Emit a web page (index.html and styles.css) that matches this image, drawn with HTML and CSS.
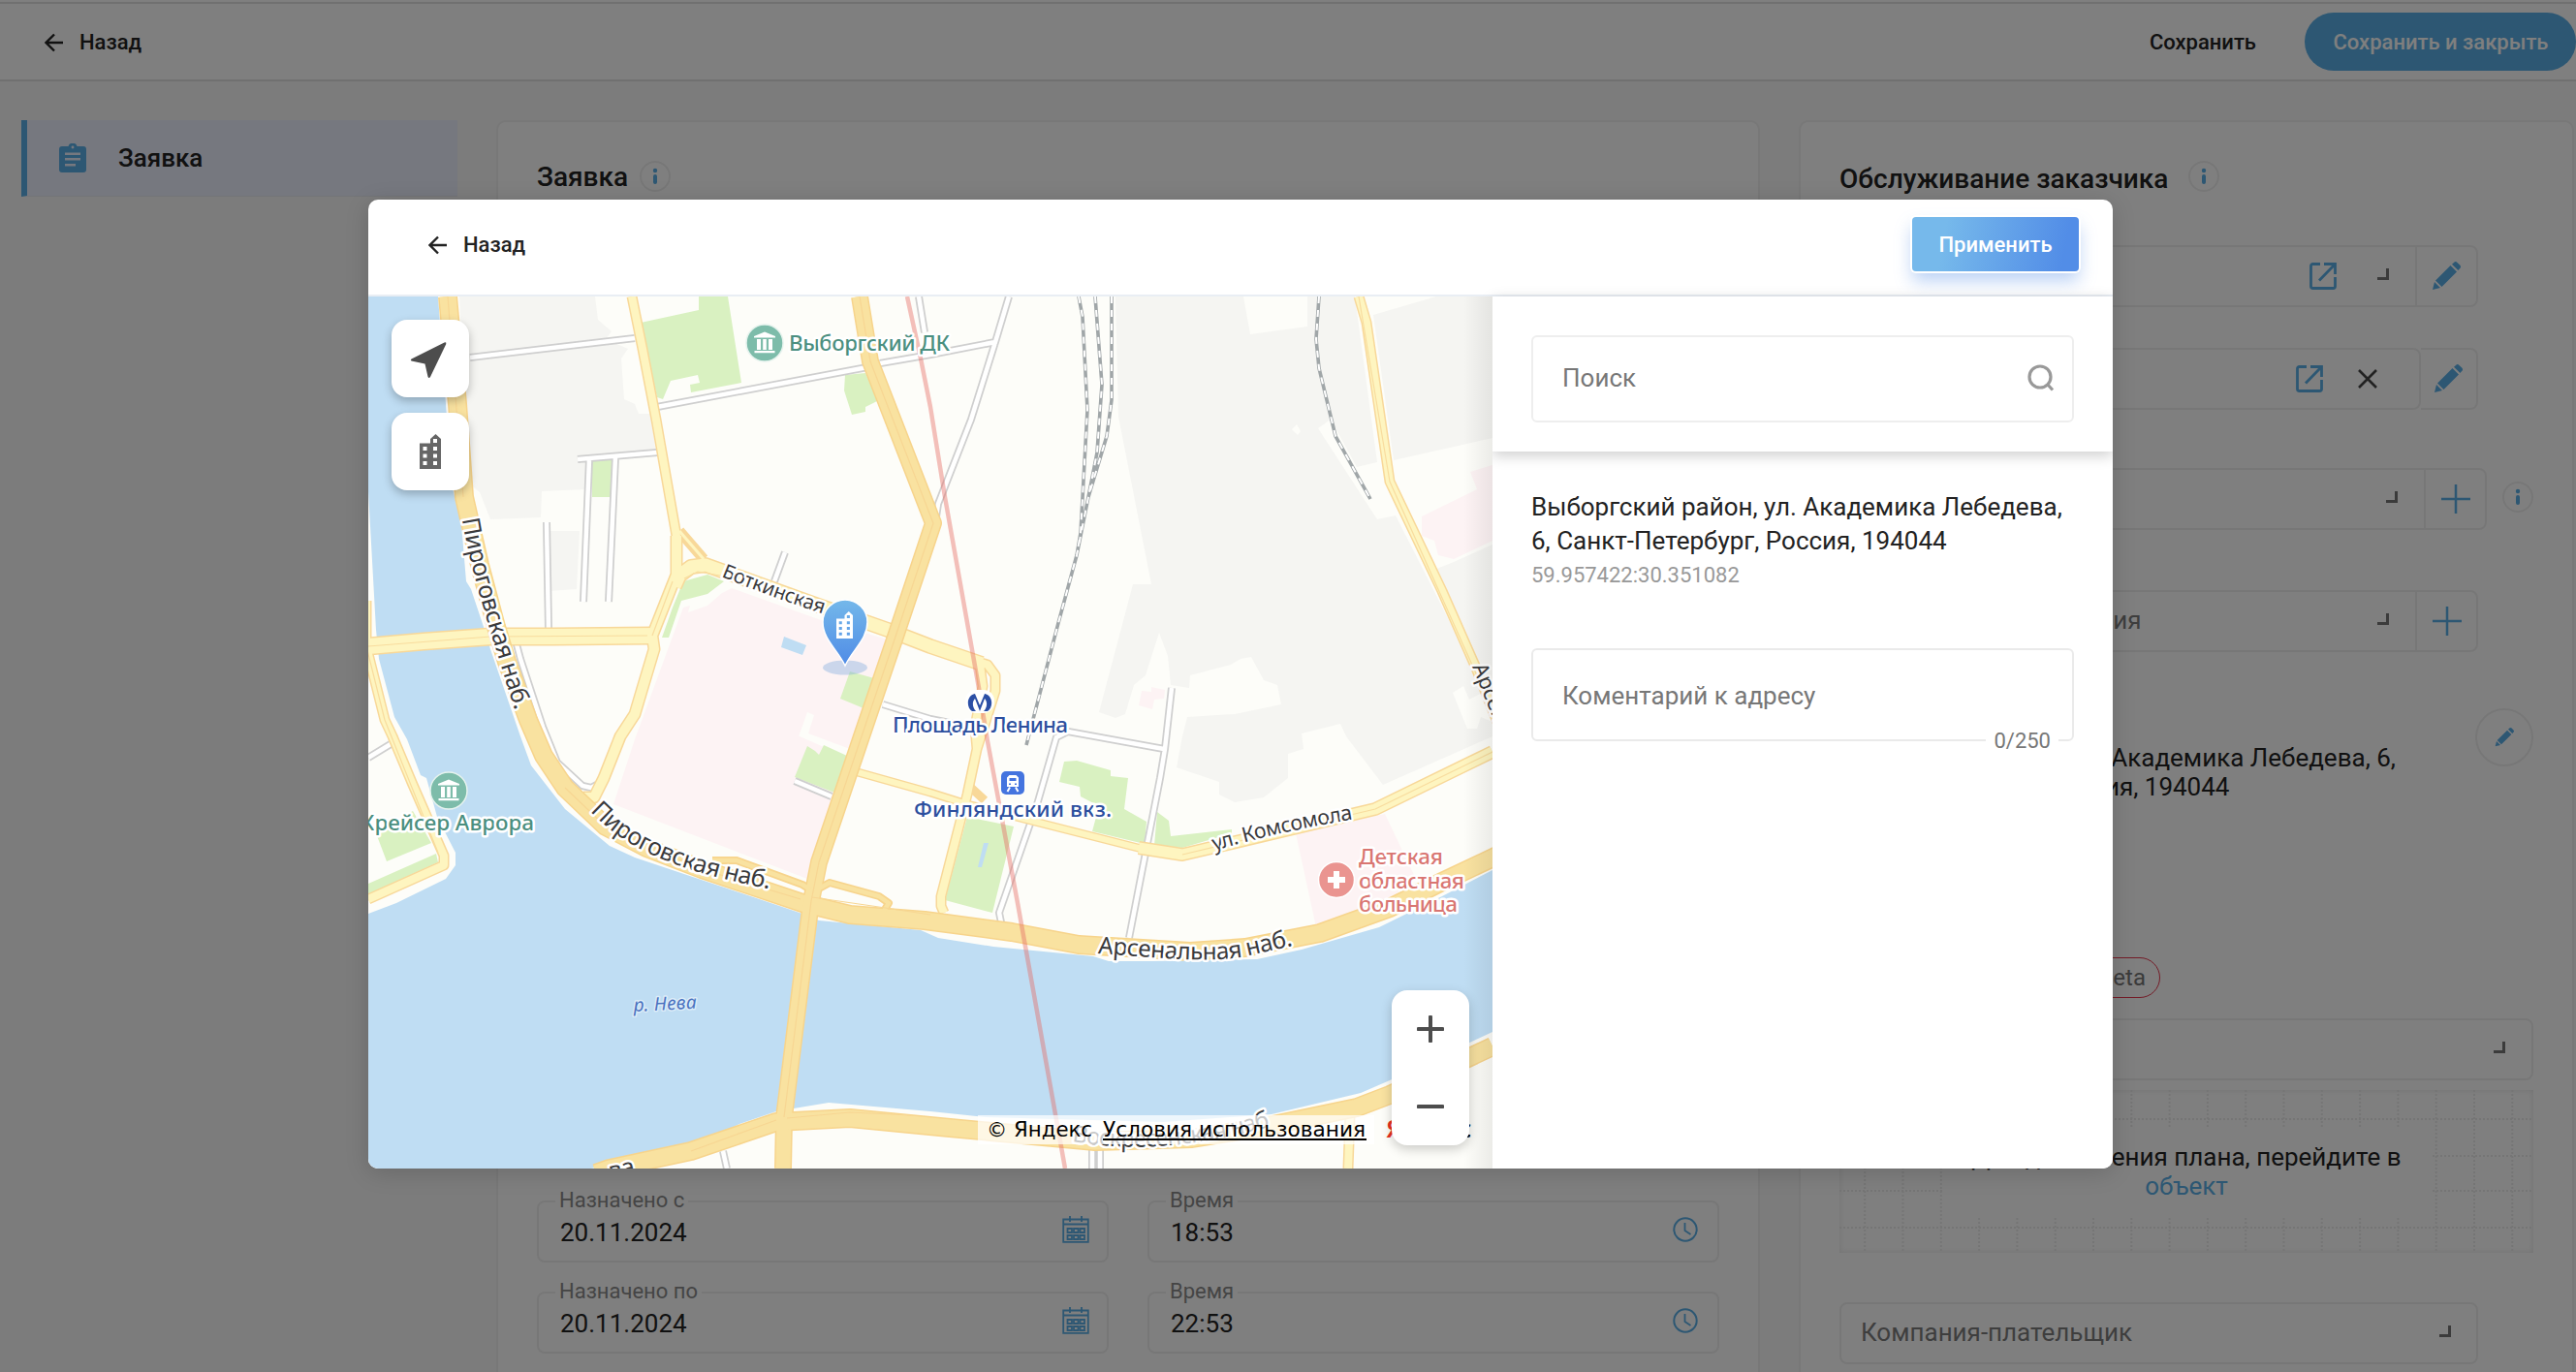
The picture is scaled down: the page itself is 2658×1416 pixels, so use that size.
FILE: index.html
```html
<!DOCTYPE html>
<html lang="ru">
<head>
<meta charset="utf-8">
<title>Заявка</title>
<link rel="stylesheet" href="styles.css">
</head>
<body>
<svg class="defs" width="0" height="0">
  <symbol id="i-back" viewBox="0 0 20 20"><path d="M19 10H2M10 1.5 1.5 10l8.500 8.500" fill="none" stroke="currentColor" stroke-width="2.400"/></symbol>
  <symbol id="i-open" viewBox="0 0 28 28"><path d="M11 1.500H3.500a2 2 0 0 0-2 2v21a2 2 0 0 0 2 2h21a2 2 0 0 0 2-2V15M15 1.500h11.500V12M26 2 10 18.500" fill="none" stroke="currentColor" stroke-width="2.800"/></symbol>
  <symbol id="i-pencil" viewBox="0 0 30 30"><path d="M1 29l2-8 6 6zM4 19.500 19.500 4l6.500 6.500L10.500 26zM21 2.700 23 .9a2.500 2.500 0 0 1 3.500 0l2.700 2.700a2.500 2.500 0 0 1 0 3.500l-1.800 2z" fill="currentColor"/></symbol>
  <symbol id="i-plus" viewBox="0 0 30 30"><path d="M15 0v30M0 15h30" stroke="currentColor" stroke-width="2.500"/></symbol>
  <symbol id="i-info" viewBox="0 0 32 32"><circle cx="16" cy="16" r="15" fill="none" stroke="#efefef" stroke-width="2"/><circle cx="16" cy="10" r="2.200" fill="currentColor"/><path d="M16 16v6" stroke="currentColor" stroke-width="4" stroke-linecap="round"/></symbol>
  <symbol id="i-cal" viewBox="0 0 28 28"><path d="M1.200 3.500h25.600v23.300H1.200zM1.200 8.500h25.600M8 0v6M20 0v6M5.500 13h4.500v4H5.500zM12 13h4.500v4H12zM18.500 13H23v4h-4.500zM5.500 20h4.500v4H5.500zM12 20h4.500v4H12zM18.500 20H23v4h-4.500z" fill="none" stroke="currentColor" stroke-width="1.800"/></symbol>
  <symbol id="i-clock" viewBox="0 0 26 26"><circle cx="13" cy="13" r="11.700" fill="none" stroke="currentColor" stroke-width="2"/><path d="M12.500 6v8l6 4" fill="none" stroke="currentColor" stroke-width="1.800"/></symbol>
  <symbol id="i-house" viewBox="0 0 22 36"><path fill-rule="evenodd" d="M0 9.500h11V5l5.500-5L22 5v31H0zM3.500 13v4h4v-4zM14 5v4h4V5zM14 13v4h4v-4zM3.500 20.500v4h4v-4zM14 20.500v4h4v-4zM3.500 28v4h4v-4zM14 28v4h4v-4z" fill="currentColor"/></symbol>
  <symbol id="i-museum" viewBox="0 0 40 40"><circle cx="20" cy="20" r="19" fill="#7dbcaa" stroke="#e6f3ee" stroke-width="1.500"/><path d="M20 8.500 31 13v1.500H9V13zM12 16h4v11h-4zM18.200 16h3.600v11h-3.600zM24 16h4v11h-4zM9.500 28h21v2.200h-21z" fill="#fff"/></symbol>
</svg>

<div class="page">
  <header class="topbar">
    <a class="back"><svg class="ic20"><use href="#i-back"/></svg>Назад</a>
    <div class="actions">
      <span class="save">Сохранить</span>
      <span class="save-close">Сохранить и закрыть</span>
    </div>
  </header>
  <div class="columns">
    <nav class="side">
      <a class="side-item">
        <svg width="28" height="30" viewBox="0 0 28 30"><path fill="#5aafe6" fill-rule="evenodd" d="M3 3h6.500a4.700 4.700 0 0 1 9 0H25a3 3 0 0 1 3 3v21a3 3 0 0 1-3 3H3a3 3 0 0 1-3-3V6a3 3 0 0 1 3-3zM14 2.500a1.400 1.400 0 1 0 0 2.900 1.400 1.400 0 0 0 0-2.900zM6 9.500v2.400h16V9.500zM6 15v2.400h16V15zM6 21v2.400h11V21z"/></svg>
        Заявка
      </a>
    </nav>
    <section class="card card-main">
      <h2 class="title title-main"><span>Заявка</span><svg class="ic32"><use href="#i-info"/></svg></h2>
      <div class="dates">
        <div class="field dated"><label>Назначено с</label><span>20.11.2024</span><svg class="ic28"><use href="#i-cal"/></svg></div>
        <div class="field dated timed"><label>Время</label><span>18:53</span><svg class="ic26"><use href="#i-clock"/></svg></div>
        <div class="field dated"><label>Назначено по</label><span>20.11.2024</span><svg class="ic28"><use href="#i-cal"/></svg></div>
        <div class="field dated timed"><label>Время</label><span>22:53</span><svg class="ic26"><use href="#i-clock"/></svg></div>
      </div>
    </section>
    <section class="card card-client">
      <h2 class="title title-client"><span>Обслуживание заказчика</span><svg class="ic32"><use href="#i-info"/></svg></h2>
      <div class="row r1"><div class="field"><svg class="ic28 blue"><use href="#i-open"/></svg><i class="corner"></i></div><div class="addon"><svg class="ic30"><use href="#i-pencil"/></svg></div></div>
      <div class="row r2"><div class="field whole"><svg class="ic28 blue"><use href="#i-open"/></svg><svg class="cross" width="20" height="20" viewBox="0 0 20 20"><path d="M1 1l18 18M19 1 1 19" stroke="#444" stroke-width="2.600"/></svg></div><div class="addon narrow"><svg class="ic30"><use href="#i-pencil"/></svg></div></div>
      <div class="row r3"><div class="field"><i class="corner"></i></div><div class="addon"><svg class="ic30"><use href="#i-plus"/></svg></div><svg class="ic32 blue tip"><use href="#i-info"/></svg></div>
      <div class="row r4"><div class="field"><span class="ph">Контактная информация</span><i class="corner"></i></div><div class="addon"><svg class="ic30"><use href="#i-plus"/></svg></div></div>
      <div class="address">
        <p>Выборгский район, ул. Академика Лебедева, 6,<br>Санкт-Петербург, Россия, 194044</p>
        <span class="round"><svg class="ic20"><use href="#i-pencil"/></svg></span>
      </div>
      <div class="beta">Beta</div>
      <div class="field select"><i class="corner"></i></div>
      <div class="plan">
        <svg class="plan-grid" width="716" height="168"><g fill="none" stroke="#ebebeb" stroke-width="2" stroke-dasharray="2 2"><path d="M26.200 0v168M65.500 0v168M104.800 0v168M144.100 0v168M183.400 0v168M222.700 0v168M262 0v168M301.300 0v168M340.600 0v168M379.900 0v168M419.200 0v168M458.500 0v168M497.800 0v168M537.100 0v168M576.400 0v168M615.700 0v168M655 0v168M694.300 0v168M0 30h716M0 68h716M0 104h716M0 142h716"/></g></svg>
        <p>Для добавления плана, перейдите в<br><a>объект</a></p>
      </div>
      <div class="field payer"><span class="ph">Компания-плательщик</span><i class="corner"></i></div>
    </section>
  </div>
</div>

<div class="overlay">
  <div class="modal">
    <header class="modal-head">
      <a class="back"><svg class="ic20"><use href="#i-back"/></svg>Назад</a>
      <button class="apply">Применить</button>
    </header>
    <div class="modal-body">
      <div class="map">
        <svg class="map-canvas" width="1160" height="900" viewBox="380 306 1160 900">
          <defs>
            <path id="t-pir1" d="M477 536C484 583 505 650 531 732"/>
            <path id="t-bot" d="M744 595 Q800 618 860 637"/>
            <path id="t-pir2" d="M609 837C649 880 705 900 797 918"/>
            <path id="t-ars" d="M1133 984C1190 988 1255 995 1290 986L1338 975"/>
            <path id="t-kom" d="M1253 878Q1320 858 1400 845"/>
            <path id="t-ars2" d="M1519 688L1545 752"/>
            <path id="t-vos" d="M1106 1178C1160 1187 1220 1188 1320 1160"/>
            <linearGradient id="pin" x1="0" y1="0" x2="0" y2="1"><stop offset="0" stop-color="#74b8ea"/><stop offset="1" stop-color="#4f8be6"/></linearGradient>
          </defs>
          <rect x="380" y="306" width="1160" height="900" fill="#fdfdf9"/>
          <g fill="#f5f5f2">
            <path d="M474 306H614L617 330 631 342 625 350 648 360 641 370 644 412 655 417 659 427H671L677 467 606 470 604 505 559 507 558 534 506 536 495 508 485 500 480 417z"/>
            <path d="M566 548H598L595 608 567 610z"/>
            <path d="M1151 306H1283L1290 345 1349 337V306H1398L1421 477 1400 482 1373 433 1360 442 1421 536 1440 532 1519 687 1540 733V760L1427 810 1389 760 1383 747 1343 757 1345 773 1329 778V803L1304 823 1274 828 1258 820V807L1214 792 1220 760 1225 740 1274 737 1322 727 1318 707 1304 702 1291 678 1280 680 1270 686 1228 697 1227 710 1208 707 1205 677 1196 653 1182 697 1170 707 1161 737 1151 741 1134 735 1169 603H1188L1154 430z"/>
            <path d="M1417 325 1482 306H1540V452L1438 475zM1540 562 1500 580 1480 588 1530 700 1540 715z"/>
          </g>
          <path fill="#fdfdf9" d="M1333 443 1338 438 1342 445 1339 449zM1499 715 1510 708 1516 722 1535 712 1540 745 1528 740 1524 752 1514 752z"/>
          <g fill="#fdf3f4">
            <path d="M755 607 847 640 916 660 877 773 834 757 840 738 833 735 825 758 874 780 833 907 633 830 655 763 705 627 712 625 710 632 730 625 745 612z"/>
            <path d="M1467 533 1524 505 1517 487 1540 480V558L1500 577 1484 573 1480 558 1467 553z"/>
            <path d="M1337 860 1429 840 1459 903 1434 930 1358 957z"/>
            <path d="M1178 713 1188 714V709L1202 712 1201 721 1191 722 1189 732 1175 728z"/>
          </g>
          <path fill="none" stroke="#fdfdf9" stroke-width="6" d="M836 738 828 758 878 780"/>
          <g fill="#d9f1c1">
            <path d="M661 333 721 320V306H751L765 395 713 405 712 397 722 395 720 387 692 393 684 412 678 410z"/>
            <path d="M872 387 893 385 907 413 893 420V425L879 428 871 403z"/>
            <path d="M611 475H631V513H611z"/>
            <path d="M705 600 730 593 747 600 730 613 703 620 690 658H683L694 627z"/>
            <path d="M877 693 902 700 891 731 867 721zM833 770 841 775 845 779 850 769 874 780 861 818 820 802z"/>
            <path d="M388 860 426 837 445 870 399 889zM380 912 450 881 452 890 380 923z"/>
            <path d="M998 843 1046 853 1024 942 975 929z"/>
            <path d="M1098 786 1111 785 1146 795V801L1164 803 1160 835 1183 848 1181 871 1127 858 1134 832 1115 822 1114 812 1093 807z"/>
            <path d="M1194 838 1206 847 1208 863 1271 856V860L1220 875 1191 873z"/>
          </g>
          <g fill="#bfddf3">
            <path d="M380 306H452L466 500 476 540 481 600 486 608 500 650 506 670 537 760 548 790 583 835 629 873 655 885 828 943 845 950 950 960 968 968 1025 977 1128 987 1144 992H1190L1297 990 1343 980 1423 957 1488 925 1540 898V1065L1434 1115 1404 1128 1312 1150 1200 1158 1017 1153 960 1147 855 1138 801 1147 763 1160 713 1185 610 1206H380V943L409 932 460 907 470 893V880L451 843 440 803 434 800 420 763 407 740 391 680 388 650 380 507z"/>
            <path d="M809 657 832 666 828 676 806 668zM1015 870H1020L1013 895H1009z"/>
          </g>
          <!-- side streets: grey casing below a white core -->
          <g fill="none">
            <path stroke="#cfcfcf" stroke-width="8" d="M485 369 655 349M678 420 895 379M908 375 960 366 1027 353 1041 306M1027 353 1002 433 968 520 965 540M596 474 678 467M608 474 602 621M635 472 628 621M564 539 566 649M810 570 799 600M948 306 954 343M911 727 960 742 1000 750M533 665 537 680 560 750 575 787 601 811 610 813 621 807M380 782 403 768M820 806 858 822M746 1188 750 1206M1102 755 1201 773M1209 710 1202 773 1197 803 1165 968M1102 755 1090 761 1071 827 1031 942 1033 952M1127 1182V1206M1135 1182V1206"/>
            <path stroke="#fff" stroke-width="4.500" d="M485 369 655 349M678 420 895 379M908 375 960 366 1027 353 1041 306M1027 353 1002 433 968 520 965 540M596 474 678 467M608 474 602 621M635 472 628 621M564 539 566 649M810 570 799 600M948 306 954 343M911 727 960 742 1000 750M533 665 537 680 560 750 575 787 601 811 610 813 621 807M380 782 403 768M820 806 858 822M746 1188 750 1206M1102 755 1201 773M1209 710 1202 773 1197 803 1165 968M1102 755 1090 761 1071 827 1031 942 1033 952M1127 1182V1206M1135 1182V1206"/>
            <path stroke="#a0a6a8" stroke-width="3.600" d="M1113 306 1117 327 1122 423 1115 550 1111 573M1130 306 1137 397 1132 467 1123 513M1147 306V413L1142 450 1123 513 1111 573 1092 643 1059 769M1361 306 1358 350 1361 380 1378 450 1414 515"/>
            <path stroke="#fff" stroke-width="2" stroke-dasharray="7 7" d="M1113 306 1117 327 1122 423 1115 550 1111 573M1130 306 1137 397 1132 467 1123 513M1147 306V413L1142 450 1123 513 1111 573 1092 643 1059 769M1361 306 1358 350 1361 380 1378 450 1414 515"/>
          </g>
          <g fill="none" stroke-linejoin="round">
            <g stroke="#f8d899">
              <path stroke-width="19" d="M380 667 437 662 506 657 571 657 673 656"/>
              <path stroke-width="13" d="M673 656 675 670 663 710 655 737 640 760 623 803 613 823 602 823M673 656 698 593V553"/>
              <path stroke-width="11" d="M698 570V553L677 433 663 360 652 306M701 548 726 577"/>
              <path stroke-width="16" d="M696 605 701 594 713 585 728 583 839 623 916 650 960 667 1013 685"/>
              <path stroke-width="11" d="M1009 683 1019 686 1027 697V713L1008 773 998 820 971 925V935L974 942M1011 686 1014 708 1006 750 1008 773"/>
              <path stroke-width="11" d="M378 620V667L397 743 405 760 426 810 458 883V893L380 928"/>
              <path stroke-width="9" d="M885 797 960 818 998 830 1056 845 1182 877M1002 813 1016 826"/>
              <path stroke-width="14" d="M1175 875 1220 882 1343 853 1419 835 1540 776"/>
              <path stroke-width="11" d="M1402 306 1410 333 1434 497 1488 610 1522 687 1545 745M1393 1150 1391 1206"/>
            </g>
            <g stroke="#fef5c0">
              <path stroke-width="16" d="M380 667 437 662 506 657 571 657 676 656"/>
              <path stroke-width="10" d="M673 656 675 670 663 710 655 737 640 760 623 803 613 823 602 823M673 656 698 593V553"/>
              <path stroke-width="8" d="M698 570V553L677 433 663 360 652 306"/>
              <path stroke-width="13" d="M696 605 701 594 713 585 728 583 839 623 916 650 960 667 1013 685"/>
              <path stroke-width="8" d="M1009 683 1019 686 1027 697V713L1008 773 998 820 971 925V935L974 942M1011 686 1014 708 1006 750 1008 773"/>
              <path stroke-width="8" d="M378 620V667L397 743 405 760 426 810 458 883V893L380 928"/>
              <path stroke-width="6" d="M885 797 960 818 998 830 1056 845 1182 877"/>
              <path stroke-width="11" d="M1175 875 1220 882 1343 853 1419 835 1540 776"/>
              <path stroke-width="8" d="M1402 306 1410 333 1434 497 1488 610 1522 687 1545 745M1393 1150 1391 1206"/>
              <path stroke-width="3" d="M701 548 726 577"/>
            </g>
            <path stroke="#f8dc9e" stroke-width="1.200" d="M380 667 506 657 668 656M1220 882 1343 853 1419 835 1540 776M706 597 720 590 760 597M1402 306 1434 497 1540 733M673 656 694 600M378 667 397 743 452 880"/>
            <g stroke="#f7d48c">
              <path stroke-width="20" d="M462 306 472 417 479 513 495 583 512 647 523 683 545 743 561 780 583 813 625 853 667 875 724 897 828 932 877 944 954 950 1044 962 1113 975 1228 982 1285 978 1362 963 1434 937 1488 910 1545 883"/>
              <path stroke-width="18" d="M887 306 898 373 963 540 923 660 889 760 845 890 837 930 809 1153 808 1206"/>
              <path stroke-width="20" d="M615 1211 629 1206 713 1188 763 1171 801 1158 877 1154 980 1164 1130 1178 1230 1175 1304 1163 1400 1143 1434 1130 1540 1080"/>
              <path stroke-width="8" d="M735 888 760 888 828 913 836 918M845 917 856 911 907 925 917 932 911 942"/>
            </g>
            <g stroke="#f9e2a0">
              <path stroke-width="17" d="M462 306 472 417 479 513 495 583 512 647 523 683 545 743 561 780 583 813 625 853 667 875 724 897 828 932 877 944 954 950 1044 962 1113 975 1228 982 1285 978 1362 963 1434 937 1488 910 1545 883"/>
              <path stroke-width="15" d="M887 306 898 373 963 540 923 660 889 760 845 890 837 930 809 1153 808 1206"/>
              <path stroke-width="17" d="M615 1211 629 1206 713 1188 763 1171 801 1158 877 1154 980 1164 1130 1178 1230 1175 1304 1163 1400 1143 1434 1130 1540 1080"/>
              <path stroke-width="4.500" d="M735 888 760 888 828 913 836 918M845 917 856 911 907 925 917 932 911 942"/>
            </g>
            <path stroke="#f7d693" stroke-width="1.200" d="M462 306 478 513M887 306 898 373 963 540 923 660 889 760 845 890 837 930 809 1153M583 813 625 853 724 897 826 928M838 926 900 935 960 944M812 1154 877 1148 940 1151M713 1188 801 1156"/>
            <path stroke="#e46a62" stroke-opacity=".42" stroke-width="4.500" d="M936 306 950 370 960 420 975 513 1010 710 1019 765 1050 932 1099 1206"/>
          </g>

          <g class="street-label">
            <text font-size="25"><textPath href="#t-pir1" textLength="205">Пироговская наб.</textPath></text>
            <text font-size="20.500"><textPath href="#t-bot" textLength="112">Боткинская</textPath></text>
            <text font-size="25"><textPath href="#t-pir2" textLength="205">Пироговская наб.</textPath></text>
            <text font-size="24.500"><textPath href="#t-ars" textLength="203">Арсенальная наб.</textPath></text>
            <text font-size="21.500"><textPath href="#t-kom" textLength="147">ул. Комсомола</textPath></text>
            <text font-size="22"><textPath href="#t-ars2">Арсен</textPath></text>
            <text font-size="24"><textPath href="#t-vos" textLength="207">Воскресенская наб</textPath></text>
            <text font-size="24" transform="translate(630 1217) rotate(-13)">ва</text>
          </g>
          <text class="river" x="654" y="1044" transform="rotate(-3 654 1044)" textLength="65">р. Нева</text>
          <use href="#i-museum" x="769" y="334" width="40" height="40"/>
          <use href="#i-museum" x="443" y="796" width="40" height="40"/>
          <text class="poi green" x="814" y="362" textLength="166">Выборгский ДК</text>
          <text class="poi green" x="372" y="857" textLength="179">Крейсер Аврора</text>
          <text class="poi navy" x="921" y="756" textLength="181">Площадь Ленина</text>
          <text class="poi blue-poi" x="943" y="843" textLength="204">Финляндский вкз.</text>
          <g class="poi rose"><text x="1402" y="892" textLength="87">Детская</text><text x="1402" y="917" textLength="109">областная</text><text x="1402" y="941" textLength="102">больница</text></g>
          <rect x="996" y="712" width="30" height="24" rx="11" fill="#fff"/>
          <path d="M1006 716C997 718 997 730 1003 734H1007C1003 730 1003 724 1006 721L1011 734 1016 721C1019 724 1019 730 1015 734H1019C1025 730 1025 718 1016 716L1011 728z" fill="#2b4fa5"/>
          <rect x="1033" y="796" width="24" height="24" rx="5" fill="#4474df"/>
          <path fill="#fff" fill-rule="evenodd" d="M1041.500 800h7l2.500 2.500v9.500h-12v-9.500zM1041.500 803v3h7v-3zM1041 808.500v1.500h2v-1.500zM1047 808.500v1.500h2v-1.500z"/>
          <path d="M1042 812.500 1039.500 817M1048 812.500 1050.500 817" stroke="#fff" stroke-width="2"/>
          <circle cx="1379" cy="908" r="18.500" fill="#ea9490" stroke="#fff" stroke-width="1.500"/>
          <path d="M1379 899v18M1370 908h18" stroke="#fff" stroke-width="6"/>

          <ellipse cx="872" cy="689" rx="23" ry="7.500" fill="#78a9dc" fill-opacity=".38"/>
          <path d="M872 687C864 670 849 660 849 642a23 23 0 0 1 46 0C895 660 880 670 872 687z" fill="url(#pin)" stroke="#fff" stroke-width="1.500"/>
          <use href="#i-house" x="863" y="631" width="17" height="28" color="#fff"/>

          <rect x="1009" y="1151" width="409" height="30" fill="#fff" fill-opacity=".72"/>
          <g class="copy"><text x="1018" y="1173" textLength="109" lengthAdjust="spacingAndGlyphs">© Яндекс</text><text x="1138" y="1173" textLength="271" lengthAdjust="spacingAndGlyphs">Условия использования</text></g>
          <path d="M1138 1176h272" stroke="#000" stroke-width="2"/>
          <text class="logo" x="1430" y="1174"><tspan fill="#e8301f">Я</tspan><tspan x="1505">с</tspan></text>
        </svg>
        <div class="map-edge"></div>
        <div class="map-tools">
          <span class="tool"><svg width="40" height="40" viewBox="0 0 40 40"><path d="M2.500 19.500 36.500 2.500q2.500-.8 1.700 1.700L22 38q-1.500 2-2.500-.3L16.500 24.500 2.500 21.500q-1.500-1 0-2z" fill="#4d4d4d"/></svg></span>
          <span class="tool grey"><svg width="22" height="36"><use href="#i-house"/></svg></span>
        </div>
        <div class="zoom">
          <svg width="28" height="28" viewBox="0 0 28 28"><path d="M14 1.500v25M1.500 14h25" stroke="#4d4d4d" stroke-width="4" stroke-linecap="round"/></svg>
          <svg width="28" height="28" viewBox="0 0 28 28"><path d="M1.500 14h25" stroke="#4d4d4d" stroke-width="4" stroke-linecap="round"/></svg>
        </div>
      </div>
      <aside class="panel">
        <div class="search"><div class="search-box">Поиск<svg width="28" height="28" viewBox="0 0 28 28"><circle cx="13" cy="13" r="11" fill="none" stroke="#999" stroke-width="3.200"/><path d="M20.500 20.500 26 26.500" stroke="#999" stroke-width="3.200"/></svg></div></div>
        <div class="found">
          <p>Выборгский район, ул. Академика Лебедева,<br>6, Санкт-Петербург, Россия, 194044</p>
          <small>59.957422:30.351082</small>
          <div class="comment"><span>Коментарий к адресу</span><span class="count">0/250</span></div>
        </div>
      </aside>
    </div>
  </div>
</div>
</body>
</html>
```

FILE: styles.css
```css
* { box-sizing: border-box; }
body { margin: 0; width: 2658px; height: 1416px; overflow: hidden; position: relative; background: #f8f8f8; color: #222; font: 400 26px/30px Roboto, sans-serif; }
p, h2 { margin: 0; }
.defs { position: absolute; }
.ic20 { width: 20px; height: 20px; }
.ic26 { width: 26px; height: 26px; }
.ic28 { width: 28px; height: 28px; }
.ic30 { width: 30px; height: 30px; }
.ic32 { width: 32px; height: 32px; color: #5aafe6; }
.blue { color: #5aafe6; }

.page { height: 1416px; overflow: hidden; }
.topbar { height: 84px; padding: 0 0 0 46px; background: #fff; border-bottom: 2px solid #e0e0e0; display: flex; align-items: center; justify-content: space-between; box-shadow: inset 0 2px #fff, inset 0 4px #e0e0e0; }
.back { display: flex; align-items: center; gap: 16px; font-weight: 500; font-size: 22px; padding-top: 5px; }
.actions { display: flex; align-items: center; gap: 50px; font-size: 22px; font-weight: 500; padding-top: 4px; }
.save { padding-top: 2px; }
.save-close { width: 280px; height: 60px; padding: 2px 0 0 1px; border-radius: 30px; background: #5aafe6; color: #fff; display: flex; align-items: center; justify-content: center; }

.columns { display: grid; grid-template-columns: 450px 1304px 800px; gap: 40px; padding: 40px 0 0 22px; height: 1400px; }
.side-item { display: flex; align-items: center; height: 79px; gap: 33px; padding-left: 33px; border-left: 6px solid #5aafe6; border-bottom: 1px solid #e8eaf0; background: #edf0ff; font-weight: 500; font-size: 26px; }
.card { background: #fff; border: 2px solid #f0f0f0; border-radius: 10px; padding: 26px 40px 0; }
.title { height: 60px; display: flex; align-items: center; font-size: 28px; font-weight: 500; }
.title span { padding-top: 1px; }
.title-main svg { margin-left: 12px; }
.title-client { padding-top: 4px; }
.title-client svg { margin-left: 21px; margin-bottom: 4px; }

.field { height: 64px; border: 2px solid #efefef; border-radius: 8px; display: flex; align-items: center; padding: 0 21px; }
.dates { margin-top: 1027px; display: grid; grid-template-columns: 590px 590px; gap: 30px 40px; }
.dated { position: relative; justify-content: space-between; padding: 0 18px 0 22px; }
.timed { padding-right: 20px; }
.dated span { padding-top: 2px; }
.dated svg { color: #5aafe6; margin-bottom: 5px; }
.dated label { position: absolute; left: 17px; top: -17px; padding: 0 4px; font-size: 22px; background: #fff; color: #8a8a8a; }
.ph { color: #7d7d7d; margin-right: auto; padding-bottom: 3px; }
.corner { width: 12px; height: 12px; border: solid #777; border-width: 0 3px 3px 0; margin-bottom: 4px; }

.row { display: flex; align-items: center; }
.row .field { flex: 1; justify-content: flex-end; border-radius: 8px 0 0 8px; border-right: 0; padding-right: 27px; }
.row .whole { border-right: 2px solid #efefef; border-radius: 8px; padding-right: 43px; gap: 36px; }
.addon { width: 65px; height: 64px; border: 2px solid #efefef; border-radius: 0 8px 8px 0; display: flex; align-items: center; justify-content: center; color: #5aafe6; padding-right: 2px; }
.narrow { width: 59px; border-left: 0; }
.r1 { width: 659px; margin-top: 41px; }
.r1 .field { gap: 42px; }
.r2 { width: 659px; margin-top: 42px; }
.r3 { margin-top: 60px; width: 716px; }
.r4 { width: 659px; margin-top: 62px; }
.r3 .addon, .r4 .addon { padding-right: 0; }
.r4 .field { padding-left: 4px; }
.tip { margin: 0 0 4px 16px; }
.address { margin-top: 58px; height: 96px; display: flex; justify-content: space-between; align-items: flex-start; }
.address p { margin-top: 36px; white-space: nowrap; }
.round { width: 60px; height: 60px; border: 2px solid #efefef; border-radius: 50%; display: flex; align-items: center; justify-content: center; color: #5aafe6; }
.beta { margin: 161px 0 0 251px; width: 80px; height: 42px; border: 1.500px solid #e8384f; border-radius: 21px; display: flex; align-items: center; justify-content: flex-end; padding-right: 14px; font-size: 24px; color: #777; }
.select { margin-top: 21px; justify-content: flex-end; padding-right: 27px; }
.plan { position: relative; margin-top: 10px; height: 168px; display: flex; align-items: center; justify-content: center; text-align: center; box-shadow: inset 0 0 6px #e4e4e4; }
.plan-grid { position: absolute; inset: 0; }
.plan p { position: relative; width: 505px; height: 92px; padding-top: 16px; background: #fff; white-space: nowrap; }
.plan a { color: #5aafe6; }
.payer { width: 659px; margin-top: 51px; padding: 0 26px 0 20px; }

.overlay { position: absolute; inset: 0; background: rgba(0, 0, 0, .5); padding: 206px 0 0 380px; }
.modal { width: 1800px; height: 1000px; background: #fff; border-radius: 10px; overflow: hidden; box-shadow: 0 4px 24px rgba(0, 0, 0, .16); }
.modal-head { height: 100px; border-bottom: 2px solid #e9eef4; padding: 0 35px 0 62px; display: flex; align-items: center; justify-content: space-between; }
.modal-head .back { padding: 0 0 4px; }
.apply { width: 172px; height: 56px; margin: 0 0 6px; border: 0; border-radius: 4px; background: linear-gradient(100deg, #76b9eb 20%, #528de7 90%); color: #fff; font: 500 22px/30px Roboto, sans-serif; padding: 2px 0 0; box-shadow: 0 0 0 2px #fff, 0 10px 18px rgba(82, 141, 231, .4); }
.modal-body { display: flex; height: 900px; }
.map { position: relative; width: 1160px; overflow: hidden; }
.map-canvas { display: block; font-family: "Noto Sans", sans-serif; }
.map-canvas text { paint-order: stroke; stroke: #fff; stroke-width: 5px; stroke-linejoin: round; }
.street-label { fill: #3a3a3c; }
.map-canvas .river { font-size: 19px; font-style: italic; fill: #4a72c0; stroke: #dcecf8; stroke-width: 3px; }
.poi { font-size: 22.500px; font-weight: 500; }
.green { fill: #4b8f80; }
.navy, .blue-poi { fill: #2d4f9e; }
.rose { fill: #d97672; }
.map-canvas .copy text { stroke: none; font-family: "DejaVu Sans", sans-serif; font-size: 22px; fill: #000; }
.map-canvas .logo { stroke: none; font-size: 26px; font-weight: 600; fill: #000; }
.map-edge { position: absolute; top: 0; right: 0; width: 30px; height: 900px; background: linear-gradient(90deg, transparent, rgba(0, 0, 0, .07)); }
.map-tools { position: absolute; left: 24px; top: 24px; display: grid; gap: 16px; }
.tool { width: 80px; height: 80px; border-radius: 16px; background: #fff; display: flex; align-items: center; justify-content: center; box-shadow: 0 4px 10px rgba(0, 0, 0, .25); }
.tool svg { margin: 2px 4px 0 0; }
.grey { color: #666; }
.grey svg { margin: 0; }
.zoom { position: absolute; left: 1056px; top: 716px; width: 80px; height: 160px; border-radius: 16px; background: #fff; display: flex; flex-direction: column; align-items: center; justify-content: space-around; box-shadow: 0 4px 12px rgba(0, 0, 0, .2); }

.panel { width: 640px; background: #fff; }
.search { padding: 40px; height: 160px; box-shadow: 0 4px 14px rgba(0, 0, 0, .2); }
.search-box { width: 560px; height: 90px; border: 2px solid #eee; border-radius: 6px; padding: 0 18px 2px 30px; display: flex; align-items: center; justify-content: space-between; color: #777; }
.found { padding: 40px; }
.found p { line-height: 35px; margin-top: 0; white-space: nowrap; }
.found small { display: block; font-size: 22px; line-height: 36px; color: #999; }
.comment { position: relative; margin-top: 57px; height: 96px; border: 2px solid #eaeaea; border-radius: 6px; padding: 2px 30px 0; display: flex; align-items: center; color: #777; }
.count { position: absolute; right: 14px; bottom: -17px; padding: 0 8px; background: #fff; font-size: 22px; }
```
